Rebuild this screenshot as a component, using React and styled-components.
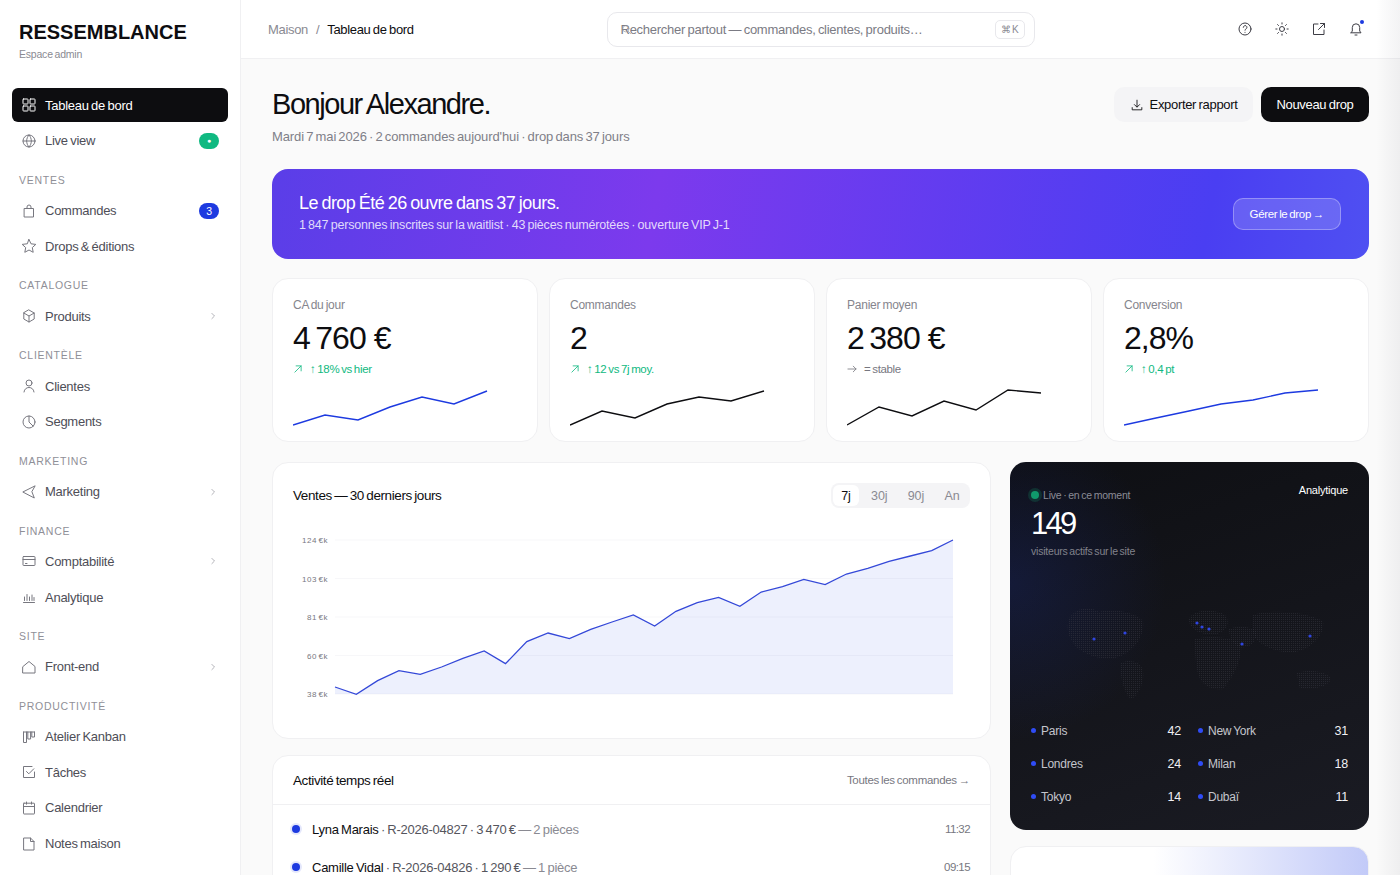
import React from "react";
import styled, { createGlobalStyle } from "styled-components";

const FONT = `"Liberation Sans", Arial, sans-serif`;
const BLUE = "#1d3ae0";
const GREEN = "#10b981";

const GlobalStyle = createGlobalStyle`
  * { box-sizing: border-box; }
  html, body { margin: 0; height: 100%; overflow: hidden; }
  body {
    font-family: ${FONT};
    background: #fafafa;
    color: #0d0d10;
    letter-spacing: -0.01em;
    word-spacing: -0.06em;
  }
`;

/* ---- icons ---- */
const Svg = ({ size = 16, stroke = 1, children }) => (
  <svg width={size} height={size} viewBox="0 0 16 16" fill="none" stroke="currentColor" strokeWidth={stroke} strokeLinecap="round" strokeLinejoin="round">
    {children}
  </svg>
);

const ICONS = {
  grid: <><rect x="2" y="2" width="5" height="5" rx=".6" /><rect x="9" y="2" width="5" height="5" rx=".6" /><rect x="2" y="9" width="5" height="5" rx=".6" /><rect x="9" y="9" width="5" height="5" rx=".6" /></>,
  globe: <><circle cx="8" cy="8" r="6" /><path d="M2 8h12M8 2c3.2 3.2 3.2 8.8 0 12M8 2c-3.2 3.2-3.2 8.8 0 12" /></>,
  bag: <path d="M3.5 5.5h9V14h-9zM6 5.5V4a2 2 0 0 1 4 0v1.5" />,
  star: <path d="M8 1.5l2 4.3 4.8.6-3.5 3.2.9 4.7L8 12l-4.2 2.3.9-4.7-3.500-3.200 4.800-.6z" />,
  box: <><path d="M8 2l5.2 3v6L8 14l-5.2-3V5z" /><path d="M2.8 5L8 8l5.2-3M8 8v6" /></>,
  user: <><circle cx="8" cy="5" r="3" /><path d="M3 14c.4-3 2.5-4.5 5-4.5s4.6 1.5 5 4.5" /></>,
  pie: <><circle cx="8" cy="8" r="6" /><path d="M8 2v6l4.2 4.2" /></>,
  send: <path d="M13.8 2L1.8 8l11.5 6-2.3-6z" />,
  card: <><rect x="2" y="3.5" width="12" height="9" rx=".6" /><path d="M2 6.5h12M4.5 10.5H6" /></>,
  bars: <path d="M2.5 13.5h11M3.5 11.5V8M6 11.5v-6M8.5 11.5V8M11 11.5V6M13 11.5v-3" />,
  home: <path d="M2 7.5l6-5 6 5V14H2z" />,
  kanban: <path d="M2.5 3h11M2.5 3v10.5h3V3M6.8 3v7h2.8V3M10.8 3v5h2.7V3" />,
  check: <><path d="M13.5 8v5.5h-11v-11H11" /><path d="M5.5 7.5l2.3 2.3 5-5" /></>,
  calendar: <><rect x="2.5" y="3.2" width="11" height="10.8" rx=".5" /><path d="M2.5 6.5h11M5.5 2v2.2M10.5 2v2.2" /></>,
  file: <path d="M3 2h6.5L13 5.5V14H3zM9.5 2v3.5H13" />,
  chevron: <path d="M6.5 4.500L10 8l-3.500 3.500" />,
  help: <><circle cx="8" cy="8" r="6" /><path d="M6.3 6.3a1.800 1.800 0 1 1 2.700 1.600c-.6.4-1 .7-1 1.300M8 11.300v.1" /></>,
  sun: <><circle cx="8" cy="8" r="2.5" /><path d="M8 1.800V3M8 13v1.200M1.800 8H3M13 8h1.200M3.600 3.600l.9.9M11.500 11.500l.9.9M3.600 12.400l.9-.9M11.500 4.500l.9-.9" /></>,
  external: <><path d="M13 9v4.500H2.500V3H7" /><path d="M9.500 2.500h4v4M13.500 2.500l-6 6" /></>,
  bell: <><path d="M3 11.800h10L11.700 10V6.500a3.700 3.700 0 0 0-7.400 0V10z" /><path d="M7 14h2" /></>,
  download: <><path d="M8 2.500V10M5 7.500l3 3 3-3M2.500 11v2.500h11V11" /></>,
  up: <path d="M3 13L13 3M5 3h8v8" />,
  flat: <path d="M1.500 8h13M10 3.500L14.500 8 10 12.500" />,
  search: <><circle cx="7" cy="7" r="4.500" /><path d="M10.500 10.500L14 14" /></>,
};

const Icon = ({ name, size, stroke }) => <Svg size={size} stroke={stroke}>{ICONS[name]}</Svg>;

/* ---- data ---- */
const NAV = [
  { items: [
    { label: "Tableau de bord", icon: "grid", active: true },
    { label: "Live view", icon: "globe", badge: "●", tone: "green" },
  ] },
  { title: "VENTES", items: [
    { label: "Commandes", icon: "bag", badge: "3", tone: "blue" },
    { label: "Drops & éditions", icon: "star" },
  ] },
  { title: "CATALOGUE", items: [{ label: "Produits", icon: "box", more: true }] },
  { title: "CLIENTÈLE", items: [
    { label: "Clientes", icon: "user" },
    { label: "Segments", icon: "pie" },
  ] },
  { title: "MARKETING", items: [{ label: "Marketing", icon: "send", more: true }] },
  { title: "FINANCE", items: [
    { label: "Comptabilité", icon: "card", more: true },
    { label: "Analytique", icon: "bars" },
  ] },
  { title: "SITE", items: [{ label: "Front-end", icon: "home", more: true }] },
  { title: "PRODUCTIVITÉ", items: [
    { label: "Atelier Kanban", icon: "kanban" },
    { label: "Tâches", icon: "check" },
    { label: "Calendrier", icon: "calendar" },
    { label: "Notes maison", icon: "file" },
  ] },
];

const KPIS = [
  { label: "CA du jour", value: "4\u2009760 €", delta: "↑ 18% vs hier", up: true, color: BLUE,
    points: [[0, 35], [32, 25], [65, 30], [97, 17], [129, 7], [161, 14], [194, 1]] },
  { label: "Commandes", value: "2", delta: "↑ 12 vs 7j moy.", up: true, color: "#0d0d10",
    points: [[0, 35], [32, 21], [65, 28], [97, 14], [129, 7], [161, 11], [194, 1]] },
  { label: "Panier moyen", value: "2\u2009380 €", delta: "= stable", up: false, color: "#0d0d10",
    points: [[0, 35], [32, 17], [65, 26], [97, 11], [129, 20], [161, 0], [194, 3]] },
  { label: "Conversion", value: "2,8%", delta: "↑ 0,4 pt", up: true, color: BLUE,
    points: [[0, 35], [32, 28], [65, 21], [97, 14], [129, 10], [161, 3], [194, 0]] },
];

const SALES = [681, 703, 662, 632, 643, 621, 595, 573, 611, 545, 519, 536, 508, 486, 465, 498, 454, 428, 412, 439, 396, 380, 358, 374, 342, 325, 304, 288, 272, 240]
  .map((v, i) => [42 + i * 21.31, v / 3 - 68]);

const CITIES = [
  ["Paris", "42"], ["New York", "31"],
  ["Londres", "24"], ["Milan", "18"],
  ["Tokyo", "14"], ["Dubaï", "11"],
];

const ACTIVITY = [
  { who: "Lyna Marais", rest: " · R-2026-04827 · 3\u2009470 € ", qty: "— 2 pièces", time: "11:32" },
  { who: "Camille Vidal", rest: " · R-2026-04826 · 1\u2009290 € ", qty: "— 1 pièce", time: "09:15" },
];

/* ---- layout ---- */
const Page = styled.div`
  display: flex;
  height: 100vh;
  overflow: hidden;
  position: relative;
`;

const EdgeShade = styled.div`
  position: absolute;
  top: 0;
  right: 0;
  bottom: 0;
  width: 24px;
  background: linear-gradient(to right, rgba(20, 20, 40, 0), rgba(20, 20, 40, 0.05));
  pointer-events: none;
`;

const Sidebar = styled.aside`
  flex: 0 0 241px;
  background: #fff;
  border-right: 1px solid #f0f0f2;
  padding: 20px 12px 0;
  overflow: hidden;
`;

const Brand = styled.div`
  padding: 0 7px 27.4px;
`;

const Logo = styled.div`
  font-size: 20px;
  line-height: 24px;
  font-weight: 700;
  letter-spacing: 0;
  color: #0d0d10;
`;

const BrandSub = styled.div`
  margin-top: 3px;
  font-size: 10.5px;
  line-height: 14px;
  color: #8a8a92;
  letter-spacing: -0.02em;
`;

const NavGroup = styled.div`
  display: flex;
  flex-direction: column;
  gap: 2px;
  margin-bottom: 6.3px;
`;

const NavTitle = styled.div`
  padding: 10px 7px 0;
  height: 28px;
  font-size: 10.5px;
  line-height: 12px;
  letter-spacing: 0.07em;
  color: #8f8f97;
`;

const NavItem = styled.div`
  display: flex;
  align-items: center;
  gap: 8px;
  height: 33.6px;
  padding: 0 9px;
  border-radius: 6px;
  font-size: 13px;
  letter-spacing: -0.02em;
  color: ${(p) => (p.$active ? "#fff" : "#4e4e57")};
  background: ${(p) => (p.$active ? "#0d0d10" : "transparent")};
  svg { color: ${(p) => (p.$active ? "#fff" : "#77777f")}; flex: none; }
`;

const NavLabel = styled.span`
  flex: 1;
`;

const Badge = styled.span`
  width: 20px;
  height: 16px;
  border-radius: 8px;
  display: flex;
  align-items: center;
  justify-content: center;
  font-size: ${(p) => (p.$tone === "green" ? "7px" : "10.5px")};
  color: #fff;
  background: ${(p) => (p.$tone === "green" ? GREEN : BLUE)};
`;

const Chevron = styled.span`
  display: flex;
  svg { color: #9a9aa2; }
`;

const Main = styled.div`
  flex: 1;
  min-width: 0;
  display: flex;
  flex-direction: column;
  overflow: hidden;
`;

const TopBar = styled.header`
  flex: none;
  height: 59px;
  display: grid;
  grid-template-columns: 1fr 428px 1fr;
  align-items: center;
  padding: 0 27px;
  background: #fff;
  border-bottom: 1px solid #f0f0f2;
`;

const Crumbs = styled.div`
  display: flex;
  gap: 8px;
  font-size: 13px;
  letter-spacing: -0.025em;
  color: #8a8a92;
`;

const CrumbNow = styled.span`
  color: #0d0d10;
`;

const Search = styled.div`
  height: 35px;
  position: relative;
  display: flex;
  align-items: center;
  justify-content: space-between;
  padding: 0 9px 0 13px;
  background: #fff;
  border: 1px solid #e8e8ec;
  border-radius: 10px;
  font-size: 13px;
  color: #7b7b84;
  letter-spacing: -0.02em;
`;

const SearchGlyph = styled.span`
  position: absolute;
  left: 13px;
  top: 11px;
  display: flex;
  color: #9a9aa2;
`;

const Kbd = styled.span`
  height: 19px;
  padding: 0 5px;
  display: flex;
  align-items: center;
  font-size: 10px;
  color: #8a8a92;
  border: 1px solid #e8e8ec;
  border-radius: 5px;
`;

const TopIcons = styled.div`
  display: flex;
  justify-content: flex-end;
  gap: 21px;
  margin-right: 9px;
  color: #3d3d45;
`;

const IconBtn = styled.span`
  position: relative;
  display: flex;
`;

const NotifDot = styled.span`
  position: absolute;
  top: -1px;
  right: 0;
  width: 4px;
  height: 4px;
  border-radius: 50%;
  background: ${BLUE};
`;

const Content = styled.main`
  flex: 1;
  display: flex;
  flex-direction: column;
  gap: 19px;
  padding: 28px 31px 0;
  overflow: hidden;
`;

const Heading = styled.div`
  flex: none;
  height: 63px;
  display: flex;
  justify-content: space-between;
  align-items: flex-start;
`;

const Title = styled.h1`
  margin: -1px 0 0;
  font-size: 29px;
  line-height: 36px;
  font-weight: 400;
  letter-spacing: -0.05em;
`;

const Subtitle = styled.p`
  margin: 6px 0 0;
  font-size: 13px;
  line-height: 18px;
  color: #7f7f88;
  letter-spacing: -0.008em;
  word-spacing: -0.1em;
`;

const Actions = styled.div`
  display: flex;
  gap: 8px;
`;

const Button = styled.button`
  height: 35px;
  display: flex;
  align-items: center;
  gap: 6px;
  padding: 0 15.5px;
  border: 0;
  border-radius: 10px;
  font: inherit;
  font-size: 13px;
  letter-spacing: -0.025em;
  word-spacing: -0.06em;
  color: ${(p) => (p.$dark ? "#fff" : "#0d0d10")};
  background: ${(p) => (p.$dark ? "#0d0d10" : "#f4f4f6")};
`;

const Banner = styled.section`
  flex: none;
  height: 90px;
  display: flex;
  align-items: center;
  justify-content: space-between;
  padding: 0 28px 0 27px;
  border-radius: 16px;
  color: #fff;
  background: linear-gradient(100deg, #5a3ee8 0%, #7c3aed 35%, #4a3ef2 85%, #4f50f2 100%);
`;

const BannerText = styled.div`
  padding-bottom: 4px;
`;

const BannerTitle = styled.div`
  font-size: 18px;
  line-height: 24px;
  letter-spacing: -0.03em;
`;

const BannerSub = styled.div`
  margin-top: 2px;
  font-size: 12.5px;
  line-height: 16px;
  letter-spacing: -0.015em;
  color: rgba(255, 255, 255, 0.82);
`;

const GhostLink = styled.span`
  height: 32px;
  padding: 0 16px;
  display: flex;
  align-items: center;
  border-radius: 10px;
  border: 1px solid rgba(255, 255, 255, 0.3);
  background: rgba(255, 255, 255, 0.16);
  font-size: 11.5px;
  letter-spacing: -0.03em;
`;

const KpiRow = styled.section`
  flex: none;
  display: grid;
  grid-template-columns: repeat(4, 1fr);
  gap: 11px;
`;

const Card = styled.div`
  background: #fff;
  border: 1px solid #f0f0f2;
  border-radius: 16px;
`;

const Kpi = styled(Card)`
  height: 164px;
  padding: 18px 20px 0;
`;

const KpiLabel = styled.div`
  font-size: 12px;
  line-height: 16px;
  color: #85858d;
  letter-spacing: -0.02em;
`;

const KpiValue = styled.div`
  margin-top: 6px;
  font-size: 32px;
  line-height: 38px;
  letter-spacing: -0.03em;
  word-spacing: 0;
`;

const KpiDelta = styled.div`
  margin-top: 4px;
  display: flex;
  align-items: center;
  gap: 7px;
  font-size: 11.5px;
  line-height: 16px;
  letter-spacing: -0.03em;
  color: ${(p) => (p.$up ? GREEN : "#77777f")};
`;

const Spark = styled.svg`
  display: block;
  margin-top: 12px;
`;

const Columns = styled.section`
  flex: none;
  margin-top: 1px;
  display: grid;
  grid-template-columns: 719px 359px;
  gap: 19px;
`;

const Stack = styled.div`
  display: flex;
  flex-direction: column;
  gap: 16px;
`;

const ChartCard = styled(Card)`
  height: 277px;
  padding: 20px 20px 0;
`;

const CardHead = styled.div`
  display: flex;
  align-items: center;
  justify-content: space-between;
`;

const CardTitle = styled.h2`
  margin: 0;
  font-size: 13.5px;
  font-weight: 400;
  letter-spacing: -0.03em;
`;

const Segmented = styled.div`
  display: flex;
  gap: 3.5px;
  padding: 2px;
  border-radius: 8px;
  background: #f4f4f6;
`;

const Segment = styled.span`
  height: 21px;
  padding: 0 8.5px;
  display: flex;
  align-items: center;
  border-radius: 6px;
  font-size: 12.5px;
  color: ${(p) => (p.$on ? "#0d0d10" : "#8a8a92")};
  background: ${(p) => (p.$on ? "#fff" : "transparent")};
`;

const ChartSvg = styled.svg`
  display: block;
  margin-top: 20px;
  text { font-family: ${FONT}; font-size: 8px; fill: #77777f; letter-spacing: 0.06em; }
`;

const ActivityCard = styled(Card)`
  height: 160px;
  overflow: hidden;
`;

const ActivityHead = styled(CardHead)`
  height: 49px;
  padding: 0 20px;
  border-bottom: 1px solid #f0f0f2;
`;

const MoreLink = styled.span`
  font-size: 11.5px;
  color: #77777f;
  letter-spacing: -0.025em;
`;

const ActivityList = styled.div`
  padding-top: 5px;
`;

const ActivityRow = styled.div`
  height: 38px;
  display: flex;
  align-items: center;
  gap: 12px;
  padding: 0 20px 0 19px;
  font-size: 13px;
  letter-spacing: -0.02em;
`;

const ActivityDot = styled.span`
  width: 8px;
  height: 8px;
  border-radius: 50%;
  background: ${BLUE};
  box-shadow: 0 0 0 2px rgba(29, 58, 224, 0.12);
`;

const ActivityText = styled.span`
  flex: 1;
`;

const Ref = styled.span`
  color: #55555d;
`;

const Muted = styled.span`
  color: #8a8a92;
`;

const Time = styled.span`
  font-size: 11.5px;
  letter-spacing: -0.05em;
  color: #77777f;
`;

const LiveCard = styled.div`
  height: 368px;
  padding: 25px 21px 0;
  position: relative;
  overflow: hidden;
  border-radius: 16px;
  color: #fff;
  background:
    radial-gradient(circle at 0% 33%, rgba(30, 50, 150, 0.26), rgba(30, 50, 150, 0) 36%),
    linear-gradient(160deg, #0e0f13 0%, #1a1b23 100%);
`;

const LiveHead = styled.div`
  display: flex;
  justify-content: space-between;
  align-items: flex-start;
`;

const LiveTag = styled.div`
  display: flex;
  align-items: center;
  gap: 4px;
  font-size: 10.5px;
  line-height: 16px;
  letter-spacing: -0.02em;
  color: #8b8c95;
`;

const LiveDot = styled.span`
  width: 8px;
  height: 8px;
  border-radius: 50%;
  background: #10996c;
  box-shadow: 0 0 0 3px rgba(16, 153, 108, 0.22);
`;

const LiveLink = styled.span`
  margin-top: -2px;
  font-size: 11px;
  line-height: 11px;
  letter-spacing: -0.02em;
`;

const LiveCount = styled.div`
  margin-top: 3px;
  font-size: 31px;
  line-height: 36px;
  letter-spacing: -0.09em;
`;

const LiveSub = styled.div`
  margin-top: 2px;
  font-size: 10.5px;
  line-height: 14px;
  letter-spacing: -0.02em;
  color: #82838c;
`;

const MapSvg = styled.svg`
  display: block;
  margin: 51px 0 0 34px;
`;

const CityGrid = styled.div`
  position: absolute;
  left: 21px;
  right: 21px;
  bottom: 17px;
  display: grid;
  grid-template-columns: 1fr 1fr;
  column-gap: 17px;
`;

const CityRow = styled.div`
  height: 33px;
  display: flex;
  align-items: center;
  gap: 5px;
  font-size: 12px;
  color: #c4c5cc;
  letter-spacing: -0.02em;
`;

const CityDot = styled.span`
  width: 5px;
  height: 5px;
  border-radius: 50%;
  background: #2f4cf5;
`;

const CityName = styled.span`
  flex: 1;
`;

const CityValue = styled.span`
  font-size: 12.5px;
  color: #f0f0f4;
`;

const GradientCard = styled(Card)`
  height: 120px;
  background: linear-gradient(90deg, #fff 40%, #c2caf8 100%);
`;

const toPath = (points) => points.map(([x, y], i) => `${i ? "L" : "M"}${x} ${y}`).join(" ");

const Sparkline = ({ points, color }) => (
  <Spark width="200" height="37" viewBox="0 -1 200 37" fill="none">
    <path d={toPath(points)} stroke={color} strokeWidth="1.4" />
  </Spark>
);

const TICKS = [["124 €k", 12], ["103 €k", 50.5], ["81 €k", 89], ["60 €k", 127.5], ["38 €k", 166]];

const SalesChart = () => (
  <ChartSvg width="678" height="190" viewBox="0 0 678 190" fill="none">
    {TICKS.map(([label, y]) => (
      <g key={label}>
        <line x1="42" x2="660" y1={y} y2={y} stroke="#f7f7f9" />
        <text x="35" y={y + 3} textAnchor="end">{label}</text>
      </g>
    ))}
    <path d={`${toPath(SALES)} L660 166 L42 166 Z`} fill="#1d3ae0" fillOpacity="0.08" stroke="none" />
    <path d={toPath(SALES)} stroke="#3448d8" strokeWidth="1.3" />
  </ChartSvg>
);

const CONTINENTS = [
  "M4 10 C10 -2 26 -3 34 3 C44 -1 70 2 78 12 C80 26 70 44 50 49 C34 52 12 44 6 30 C2 24 2 16 4 10 Z",
  "M56 54 C64 50 76 52 78 62 C80 74 72 88 66 90 C60 86 54 68 56 54 Z",
  "M124 10 C128 0 150 -1 160 6 C166 14 162 22 150 26 C138 26 124 22 124 10 Z",
  "M130 30 C142 26 168 28 176 34 C178 48 170 66 158 80 C146 82 134 76 132 60 C130 50 130 40 130 30 Z",
  "M164 20 C174 16 186 18 192 22 C192 34 184 40 174 38 C168 36 164 28 164 20 Z",
  "M188 6 C206 0 240 2 258 12 C260 24 250 40 226 44 C208 42 192 36 188 24 Z",
  "M232 64 C244 60 262 62 266 70 C262 80 240 82 234 78 Z",
];
const PINS = [[29, 30], [60, 24], [132, 14], [137, 18], [144, 20], [177, 35], [245, 27]];

const WorldMap = () => (
  <MapSvg width="270" height="92" viewBox="0 0 270 92" fill="none">
    <defs>
      <pattern id="mapDots" width="2" height="2" patternUnits="userSpaceOnUse">
        <rect width="1" height="1" fill="#3a3b45" />
      </pattern>
    </defs>
    {CONTINENTS.map((d) => <path key={d} d={d} fill="url(#mapDots)" opacity="0.45" />)}
    {PINS.map(([x, y]) => <circle key={`${x}-${y}`} cx={x} cy={y} r="1.6" fill="#2f45e0" />)}
  </MapSvg>
);

export default function App() {
  return (
    <Page>
      <GlobalStyle />
      <Sidebar>
        <Brand>
          <Logo>RESSEMBLANCE</Logo>
          <BrandSub>Espace admin</BrandSub>
        </Brand>
        {NAV.map((group, i) => (
          <NavGroup key={i}>
            {group.title && <NavTitle>{group.title}</NavTitle>}
            {group.items.map((item) => (
              <NavItem key={item.label} $active={item.active}>
                <Icon name={item.icon} />
                <NavLabel>{item.label}</NavLabel>
                {item.badge && <Badge $tone={item.tone}>{item.badge}</Badge>}
                {item.more && <Chevron><Icon name="chevron" size={12} /></Chevron>}
              </NavItem>
            ))}
          </NavGroup>
        ))}
      </Sidebar>

      <Main>
        <TopBar>
          <Crumbs>
            <span>Maison</span>
            <span>/</span>
            <CrumbNow>Tableau de bord</CrumbNow>
          </Crumbs>
          <Search>
            <SearchGlyph><Icon name="search" size={11} /></SearchGlyph>
            <span>Rechercher partout — commandes, clientes, produits…</span>
            <Kbd>⌘ K</Kbd>
          </Search>
          <TopIcons>
            <IconBtn><Icon name="help" /></IconBtn>
            <IconBtn><Icon name="sun" /></IconBtn>
            <IconBtn><Icon name="external" /></IconBtn>
            <IconBtn><Icon name="bell" /><NotifDot /></IconBtn>
          </TopIcons>
        </TopBar>

        <Content>
          <Heading>
            <div>
              <Title>Bonjour Alexandre.</Title>
              <Subtitle>Mardi 7 mai 2026 · 2 commandes aujourd'hui · drop dans 37 jours</Subtitle>
            </div>
            <Actions>
              <Button><Icon name="download" size={14} /> Exporter rapport</Button>
              <Button $dark>Nouveau drop</Button>
            </Actions>
          </Heading>

          <Banner>
            <BannerText>
              <BannerTitle>Le drop Été 26 ouvre dans 37 jours.</BannerTitle>
              <BannerSub>1 847 personnes inscrites sur la waitlist · 43 pièces numérotées · ouverture VIP J-1</BannerSub>
            </BannerText>
            <GhostLink>Gérer le drop →</GhostLink>
          </Banner>

          <KpiRow>
            {KPIS.map((kpi) => (
              <Kpi key={kpi.label}>
                <KpiLabel>{kpi.label}</KpiLabel>
                <KpiValue>{kpi.value}</KpiValue>
                <KpiDelta $up={kpi.up}>
                  <Icon name={kpi.up ? "up" : "flat"} size={10} stroke={1.3} />
                  {kpi.delta}
                </KpiDelta>
                <Sparkline points={kpi.points} color={kpi.color} />
              </Kpi>
            ))}
          </KpiRow>

          <Columns>
            <Stack>
              <ChartCard>
                <CardHead>
                  <CardTitle>Ventes — 30 derniers jours</CardTitle>
                  <Segmented>
                    <Segment $on>7j</Segment>
                    <Segment>30j</Segment>
                    <Segment>90j</Segment>
                    <Segment>An</Segment>
                  </Segmented>
                </CardHead>
                <SalesChart />
              </ChartCard>
              <ActivityCard>
                <ActivityHead>
                  <CardTitle>Activité temps réel</CardTitle>
                  <MoreLink>Toutes les commandes →</MoreLink>
                </ActivityHead>
                <ActivityList>
                  {ACTIVITY.map((row) => (
                    <ActivityRow key={row.time}>
                      <ActivityDot />
                      <ActivityText>{row.who}<Ref>{row.rest}</Ref><Muted>{row.qty}</Muted></ActivityText>
                      <Time>{row.time}</Time>
                    </ActivityRow>
                  ))}
                </ActivityList>
              </ActivityCard>
            </Stack>
            <Stack>
              <LiveCard>
                <LiveHead>
                  <LiveTag><LiveDot />Live · en ce moment</LiveTag>
                  <LiveLink>Analytique</LiveLink>
                </LiveHead>
                <LiveCount>149</LiveCount>
                <LiveSub>visiteurs actifs sur le site</LiveSub>
                <WorldMap />
                <CityGrid>
                  {CITIES.map(([city, n]) => (
                    <CityRow key={city}>
                      <CityDot />
                      <CityName>{city}</CityName>
                      <CityValue>{n}</CityValue>
                    </CityRow>
                  ))}
                </CityGrid>
              </LiveCard>
              <GradientCard />
            </Stack>
          </Columns>
        </Content>
      </Main>
      <EdgeShade />
    </Page>
  );
}
